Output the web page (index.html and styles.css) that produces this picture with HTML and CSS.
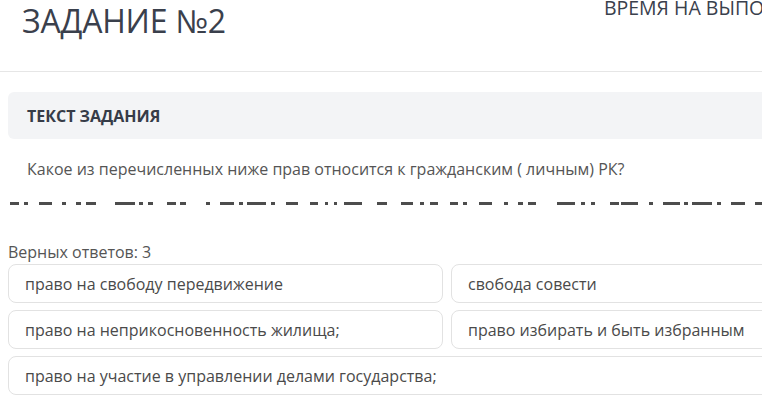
FILE: index.html
```html
<!DOCTYPE html>
<html lang="ru">
<head>
  <meta charset="UTF-8" />
  <meta name="viewport" content="width=device-width, initial-scale=1.0">
  <title>Задание №2</title>
  <link rel="stylesheet" href="styles.css">
</head>
<body>
  <!-- Header with task number and timer -->
  <div class="header">
    <h1 class="task-title">ЗАДАНИЕ №2</h1>
    <div class="timer">ВРЕМЯ НА ВЫПОЛНЕНИЕ</div>
  </div>

  <div class="content">
    <div class="task-label">ТЕКСТ ЗАДАНИЯ</div>

    <p class="question">Какое из перечисленных ниже прав относится к гражданским ( личным) РК?</p>

    <!-- scrambled line under the question -->
    <svg class="scramble" width="770" height="3" viewBox="0 0 770 3">
      <g fill="#4d4d4d">
        <rect x="2" y="0" width="9" height="3"/>
        <rect x="16" y="0" width="4" height="3"/>
        <rect x="31" y="0" width="13" height="3"/>
        <rect x="54" y="0" width="4" height="3"/>
        <rect x="68" y="0" width="5" height="3"/>
        <rect x="78" y="0" width="10" height="3"/>
        <rect x="107" y="0" width="20" height="3"/>
        <rect x="131" y="0" width="4" height="3"/>
        <rect x="140" y="0" width="5" height="3"/>
        <rect x="159" y="0" width="9" height="3"/>
        <rect x="172" y="0" width="6" height="3"/>
        <rect x="198" y="0" width="4" height="3"/>
        <rect x="212" y="0" width="14" height="3"/>
        <rect x="231" y="0" width="4" height="3"/>
        <rect x="239" y="0" width="19" height="3"/>
        <rect x="263" y="0" width="4" height="3"/>
        <rect x="278" y="0" width="12" height="3"/>
        <rect x="302" y="0" width="8" height="3"/>
        <rect x="317" y="0" width="3" height="3"/>
        <rect x="326" y="0" width="3" height="3"/>
        <rect x="336" y="0" width="18" height="3"/>
        <rect x="369" y="0" width="10" height="3"/>
        <rect x="393" y="0" width="12" height="3"/>
        <rect x="412" y="0" width="4" height="3"/>
        <rect x="422" y="0" width="8" height="3"/>
        <rect x="442" y="0" width="8" height="3"/>
        <rect x="455" y="0" width="4" height="3"/>
        <rect x="471" y="0" width="13" height="3"/>
        <rect x="496" y="0" width="4" height="3"/>
        <rect x="510" y="0" width="5" height="3"/>
        <rect x="520" y="0" width="8" height="3"/>
        <rect x="549" y="0" width="18" height="3"/>
        <rect x="573" y="0" width="4" height="3"/>
        <rect x="583" y="0" width="4" height="3"/>
        <rect x="602" y="0" width="9" height="3"/>
        <rect x="613" y="0" width="17" height="3"/>
        <rect x="641" y="0" width="4" height="3"/>
        <rect x="655" y="0" width="17" height="3"/>
        <rect x="676" y="0" width="4" height="3"/>
        <rect x="684" y="0" width="20" height="3"/>
        <rect x="709" y="0" width="4" height="3"/>
        <rect x="723" y="0" width="14" height="3"/>
        <rect x="747" y="0" width="12" height="3"/>
      </g>
    </svg>

    <div class="answers-count">Верных ответов: 3</div>

    <div class="answers">
      <div class="answer">право на свободу передвижение</div>
      <div class="answer">свобода совести</div>
      <div class="answer">право на неприкосновенность жилища;</div>
      <div class="answer">право избирать и быть избранным</div>
      <div class="answer wide">право на участие в управлении делами государства;</div>
    </div>
  </div>
</body>
</html>
```

FILE: styles.css
```css
body {
  margin: 0;
  padding: 0;
  background-color: #ffffff;
  font-family: 'Open Sans', 'Noto Sans', sans-serif;
  color: #555555;
  overflow: hidden;
  width: 762px;
  height: 401px;
}

.header {
  display: flex;
  align-items: flex-start;
  height: 71px;
  border-bottom: 1px solid #e6e6e6;
  padding-left: 22px;
  white-space: nowrap;
}

.task-title {
  margin: 0;
  font-size: 32px;
  line-height: 42px;
  font-weight: 400;
  color: #3a404c;
  letter-spacing: -0.2px;
}

.timer {
  margin: -4px 0 0 378px;
  font-size: 19.5px;
  line-height: 24px;
  color: #3a404c;
}

.content {
  width: 878px;
  margin: 20px 0 0 8px;
}

.task-label {
  height: 47px;
  display: flex;
  align-items: center;
  padding-left: 19px;
  background-color: #f3f4f6;
  border-radius: 6px;
  font-size: 16px;
  font-weight: 700;
  color: #363c48;
}

.question {
  margin: 19px 0 0;
  padding-left: 19px;
  font-size: 16px;
  line-height: 22px;
  color: #555555;
}

.scramble {
  display: block;
  margin-top: 22px;
}

.answers-count {
  margin-top: 36px;
  font-size: 16px;
  line-height: 22px;
  color: #555555;
}

.answers {
  display: grid;
  grid-template-columns: 435px 435px;
  gap: 7px 8px;
  margin-top: 1px;
}

.answer {
  height: 39px;
  box-sizing: border-box;
  display: flex;
  align-items: center;
  padding-left: 16px;
  border: 1px solid #e2e2e2;
  border-radius: 8px;
  font-size: 16px;
  color: #4a4a4a;
}

.answer.wide {
  grid-column: span 2;
}
```
